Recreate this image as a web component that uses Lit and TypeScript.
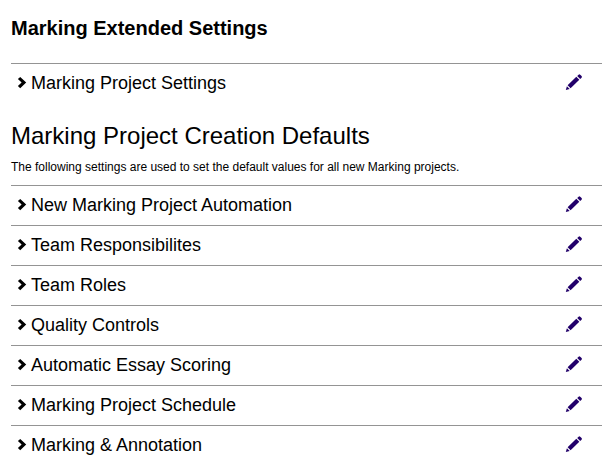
import { LitElement, html, css } from "lit";
import { customElement, property } from "lit/decorators.js";

@customElement("setting-row")
export class SettingRow extends LitElement {
  @property() label = "";

  static styles = css`
    :host {
      display: flex;
      justify-content: space-between;
      align-items: center;
      box-sizing: border-box;
      min-height: 40px;
      padding: 0 18px 2px 6px;
      border-top: 1px solid #949494;
    }
    button {
      display: flex;
      align-items: center;
      margin: 0;
      padding: 0;
      border: 0;
      background: none;
      color: inherit;
      font: inherit;
      cursor: pointer;
    }
    .toggle {
      gap: 4px;
      font-size: 18px;
      line-height: 24px;
    }
    .edit {
      color: #22006a;
    }
    svg {
      display: block;
      fill: currentColor;
    }
  `;

  render() {
    return html`
      <button class="toggle" type="button" aria-expanded="false">
        <svg width="10" height="12" viewBox="0 0 10 12" aria-hidden="true">
          <path d="M3.2 0 9.2 5.6 3.2 11.2 0.9 9.1 4.6 5.6 0.9 2.1Z" />
        </svg>
        <span>${this.label}</span>
      </button>
      <button class="edit" type="button" aria-label="Edit ${this.label}">
        <svg width="20" height="18" viewBox="0 0 20 18" aria-hidden="true">
          <path d="M1.8 16 2.9 12.2 5.7 14.9ZM3.6 11.3 12.3 2.8 15.3 5.8 6.6 14.2ZM13.2 2 14.6 0.7Q15.4 0 16.2 0.7L17.6 2.1Q18.3 2.9 17.6 3.7L16.2 5Z" />
        </svg>
      </button>
    `;
  }
}

@customElement("app-root")
export class AppRoot extends LitElement {
  private defaults = [
    "New Marking Project Automation",
    "Team Responsibilites",
    "Team Roles",
    "Quality Controls",
    "Automatic Essay Scoring",
    "Marking Project Schedule",
    "Marking & Annotation",
  ];

  static styles = css`
    :host {
      display: block;
      padding: 16px 14px 0 11px;
      background: #fff;
      color: #000;
      font-family: "Liberation Sans", Arial, sans-serif;
    }
    h1,
    h2,
    p {
      margin: 0;
    }
    h1 {
      margin-bottom: 23px;
      font-size: 20px;
      line-height: 24px;
      font-weight: 700;
    }
    h2 {
      margin-top: 18px;
      font-size: 24px;
      line-height: 30px;
      font-weight: 400;
    }
    p {
      margin: 8px 0 10px;
      font-size: 12px;
      line-height: 16px;
    }
  `;

  render() {
    return html`
      <h1>Marking Extended Settings</h1>
      <setting-row label="Marking Project Settings"></setting-row>
      <h2>Marking Project Creation Defaults</h2>
      <p>The following settings are used to set the default values for all new Marking projects.</p>
      ${this.defaults.map((label) => html`<setting-row label=${label}></setting-row>`)}
    `;
  }
}
